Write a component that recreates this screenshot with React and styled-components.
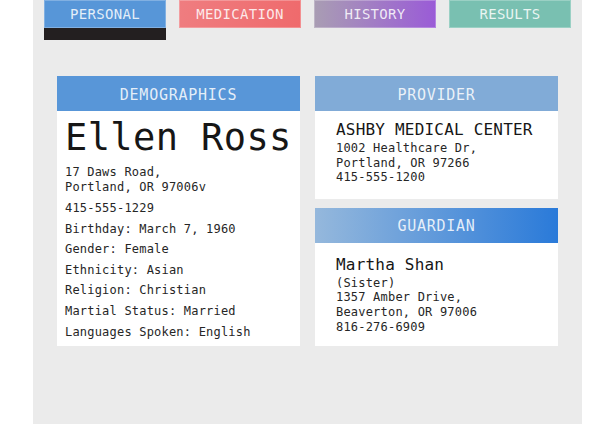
import React from 'react'
import styled, { createGlobalStyle } from 'styled-components'

const GlobalStyle = createGlobalStyle`
  html, body {
    margin: 0;
    padding: 0;
    background: #fff;
  }
  body {
    font-family: "DejaVu Sans Mono", "Liberation Mono", monospace;
  }
`

const Page = styled.div`
  width: 549px;
  min-height: 100vh;
  margin: 0 auto;
  background-color: #ebebeb;
  padding: 0 11px;
  box-sizing: border-box;
`

const TabBar = styled.nav`
  display: flex;
  align-items: flex-start;
  gap: 13px;
  height: 41px;
`

const Tab = styled.div`
  width: 122px;
  height: 28px;
  box-sizing: content-box;
  display: flex;
  align-items: center;
  justify-content: center;
  background: ${p => p.$bg};
  color: rgba(255, 255, 255, 0.85);
  font-size: 14px;
  letter-spacing: 0.3px;
  box-shadow: inset 0 0 0 1px rgba(255, 255, 255, 0.25);
  border-bottom: ${p => (p.$active ? '12px solid #231f20' : 'none')};
`

const Content = styled.main`
  display: grid;
  grid-template-columns: 243px 243px;
  gap: 15px;
  margin-top: 35px;
  padding: 0 13px;
`

const Column = styled.div`
  display: flex;
  flex-direction: column;
  gap: 9px;
`

const Card = styled.section`
  display: flex;
  flex-direction: column;
  background: #fff;
  flex: ${p => (p.$grow ? 1 : 'none')};
`

const CardHeader = styled.h2`
  margin: 0;
  height: 35px;
  padding-top: 2px;
  box-sizing: border-box;
  display: flex;
  align-items: center;
  justify-content: center;
  background: ${p => p.$bg};
  color: rgba(255, 255, 255, 0.85);
  font-size: 15px;
  font-weight: normal;
  letter-spacing: 0.75px;
`

const CardBody = styled.div`
  padding: ${p => p.$pad};
  color: #262626;
  flex: 1;
`

const BigName = styled.div`
  font-size: 37px;
  line-height: 37px;
  letter-spacing: 0.4px;
  color: #161616;
`

const Name = styled.div`
  font-size: 16px;
  line-height: 20px;
  letter-spacing: 0.2px;
  color: #161616;
`

const Lines = styled.div`
  font-size: 12px;
  line-height: ${p => p.$lh}px;
  letter-spacing: 0.2px;
  margin-top: ${p => p.$mt || 0}px;
`

const tabs = [
  { label: 'PERSONAL', bg: '#5796d8', active: true },
  { label: 'MEDICATION', bg: 'linear-gradient(100deg, #ef7d80, #ef6a6c)' },
  { label: 'HISTORY', bg: 'linear-gradient(90deg, #a99db3, #9a5bd7)' },
  { label: 'RESULTS', bg: '#79c0b1' },
]

const details = [
  '415-555-1229',
  'Birthday: March 7, 1960',
  'Gender: Female',
  'Ethnicity: Asian',
  'Religion: Christian',
  'Martial Status: Married',
  'Languages Spoken: English',
]

const App = () => {
  return (
    <>
      <GlobalStyle />
      <Page>
        <TabBar>
          {tabs.map(t => (
            <Tab key={t.label} $bg={t.bg} $active={t.active}>
              {t.label}
            </Tab>
          ))}
        </TabBar>
        <Content>
          <Card>
            <CardHeader $bg="#5896d8">DEMOGRAPHICS</CardHeader>
            <CardBody $pad="8px 8px 4px">
              <BigName>Ellen Ross</BigName>
              <Lines $lh={15} $mt={9}>
                17 Daws Road,
                <br />
                Portland, OR 97006v
              </Lines>
              <Lines $lh={20.6} $mt={3}>
                {details.map(d => (
                  <div key={d}>{d}</div>
                ))}
              </Lines>
            </CardBody>
          </Card>
          <Column>
            <Card>
              <CardHeader $bg="#81abd7">PROVIDER</CardHeader>
              <CardBody $pad="9px 21px 14px">
                <Name>ASHBY MEDICAL CENTER</Name>
                <Lines $lh={14.5} $mt={1}>
                  1002 Healthcare Dr,
                  <br />
                  Portland, OR 97266
                  <br />
                  415-555-1200
                </Lines>
              </CardBody>
            </Card>
            <Card $grow>
              <CardHeader $bg="linear-gradient(90deg, #95b8dc, #2a7ad9)">GUARDIAN</CardHeader>
              <CardBody $pad="12px 21px 8px">
                <Name>Martha Shan</Name>
                <Lines $lh={14.8} $mt={1}>
                  (Sister)
                  <br />
                  1357 Amber Drive,
                  <br />
                  Beaverton, OR 97006
                  <br />
                  816-276-6909
                </Lines>
              </CardBody>
            </Card>
          </Column>
        </Content>
      </Page>
    </>
  )
}

export default App
